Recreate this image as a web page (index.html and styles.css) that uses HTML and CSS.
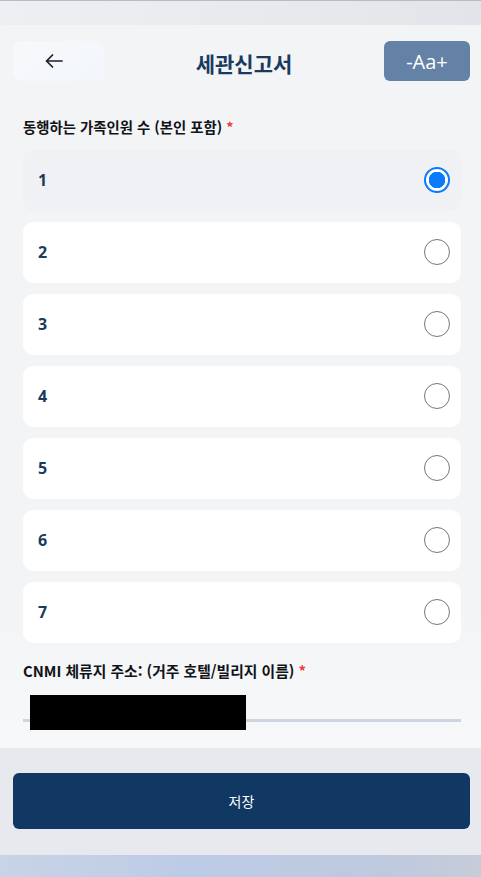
FILE: index.html
```html
<!DOCTYPE html>
<html lang="ko">
  <head>
    <meta charset="UTF-8" />
    <meta name="viewport" content="width=device-width, initial-scale=1.0" />
    <title>세관신고서</title>
    <link rel="stylesheet" href="styles.css">
  </head>
  <body>
    <div class="app">
      <div class="status-bar"></div>

      <main class="content">
        <header class="header">
          <button class="back-btn" aria-label="뒤로">
            <svg width="20" height="16" viewBox="0 0 20 16">
              <path d="M18 8H2.5M8.5 2L2.5 8l6 6" fill="none" stroke="#1a1f2b" stroke-width="1.7" stroke-linecap="round" stroke-linejoin="round"/>
            </svg>
          </button>
          <h1 class="title">세관신고서</h1>
          <button class="font-btn">-Aa+</button>
        </header>

        <section class="form">
          <p class="field-label">동행하는 가족인원 수 (본인 포함) <span class="required">*</span></p>

          <div class="options">
            <label class="option selected">
              <span class="option-text">1</span>
              <span class="radio"></span>
            </label>
            <label class="option">
              <span class="option-text">2</span>
              <span class="radio"></span>
            </label>
            <label class="option">
              <span class="option-text">3</span>
              <span class="radio"></span>
            </label>
            <label class="option">
              <span class="option-text">4</span>
              <span class="radio"></span>
            </label>
            <label class="option">
              <span class="option-text">5</span>
              <span class="radio"></span>
            </label>
            <label class="option">
              <span class="option-text">6</span>
              <span class="radio"></span>
            </label>
            <label class="option">
              <span class="option-text">7</span>
              <span class="radio"></span>
            </label>
          </div>

          <p class="field-label address-label">CNMI 체류지 주소: (거주 호텔/빌리지 이름) <span class="required">*</span></p>
          <div class="input-wrap">
            <div class="text-input"></div>
            <div class="redacted"></div>
          </div>
        </section>
      </main>

      <footer class="footer">
        <button class="save-btn">저장</button>
      </footer>

      <div class="bottom-strip"></div>
    </div>
  </body>
</html>
```

FILE: styles.css
```css
* {
  margin: 0;
  padding: 0;
  box-sizing: border-box;
  font-family: "Noto Sans CJK KR", "Noto Sans", sans-serif;
}

body {
  width: 481px;
  height: 877px;
  overflow: hidden;
  background-color: #f3f4f6;
}

.app {
  display: flex;
  flex-direction: column;
  height: 877px;
}

.status-bar {
  height: 25px;
  border-top: 1px solid #b9bbc0;
  background: linear-gradient(90deg, #eeeff2, #e7e8ec 70%, #e2e4e9);
}

.content {
  flex: 1;
  padding-top: 16px;
  background: linear-gradient(180deg, #f3f4f6 80%, #f7f8fa);
}

.header {
  display: flex;
  justify-content: space-between;
  align-items: center;
  height: 40px;
  padding: 0 11px 0 13px;
}

button {
  border: none;
  cursor: pointer;
}

.back-btn {
  width: 91px;
  height: 40px;
  padding-right: 9px;
  border-radius: 8px;
  background: linear-gradient(135deg, #f7f8fa, #f2f6fb);
  display: flex;
  align-items: center;
  justify-content: center;
}

.title {
  margin-top: 3px;
  font-size: 21px;
  font-weight: 700;
  color: #1b3a60;
}

.font-btn {
  width: 86px;
  height: 40px;
  border-radius: 6px;
  background-color: #6482a6;
  color: #ffffff;
  font-family: "Open Sans", sans-serif;
  font-size: 20px;
}

.form {
  padding: 0 20px 0 23px;
}

.field-label {
  margin-top: 37px;
  margin-bottom: 14px;
  font-size: 14.4px;
  line-height: 18px;
  font-weight: 700;
  color: #111318;
}

.required {
  color: #ef3b3b;
}

.options {
  display: flex;
  flex-direction: column;
  gap: 11px;
}

.option {
  display: flex;
  justify-content: space-between;
  align-items: center;
  height: 61px;
  padding: 0 11px 2px 15px;
  border-radius: 10px;
  background-color: #ffffff;
}

.option.selected {
  background-color: #f0f1f4;
}

.option-text {
  font-family: "Open Sans", sans-serif;
  font-size: 16px;
  font-weight: 700;
  color: #1b3a5e;
}

.radio {
  width: 26px;
  height: 26px;
  border-radius: 50%;
  border: 1.6px solid #777777;
  background-color: #ffffff;
}

.option.selected .radio {
  border: 2px solid #0a7aff;
  background: radial-gradient(circle, #0a7aff 0 8px, #ffffff 8.5px);
}

.address-label {
  margin-top: 19px;
  margin-bottom: 0;
  font-size: 14.8px;
}

.input-wrap {
  position: relative;
}

.text-input {
  height: 42px;
  border-bottom: 3px solid #cbd5e2;
}

.redacted {
  position: absolute;
  left: 7px;
  top: 15px;
  width: 216px;
  height: 35px;
  background-color: #000000;
}

.footer {
  height: 107px;
  padding: 25px 11px 0 13px;
  background-color: #e8e9ee;
}

.save-btn {
  width: 100%;
  height: 56px;
  border-radius: 6px;
  background-color: #113863;
  color: #ffffff;
  font-size: 14px;
}

.bottom-strip {
  height: 22px;
  background: linear-gradient(90deg, #c9d3e6, #bccbe6 40%, #bfc9de 80%, #c6ccd9);
}
```
